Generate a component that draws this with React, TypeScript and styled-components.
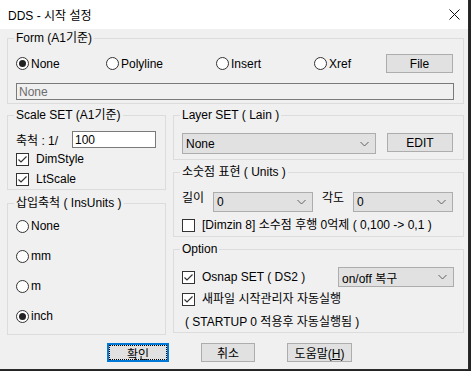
import React from "react";
import styled, { createGlobalStyle } from "styled-components";

const GlobalStyle = createGlobalStyle`
	html, body {
		margin: 0;
		padding: 0;
		background: #232323;
	}
	body {
		font-family: "Liberation Sans", "Noto Sans CJK KR", sans-serif;
		font-size: 12px;
		color: #000;
	}
	* {
		box-sizing: border-box;
	}
`;

const Window = styled.div`
	width: 469px;
	height: 370px;
	background: #f0f0f0;
	border-right: 1px solid #2b2b2b;
	border-bottom: 1px solid #2b2b2b;
	display: flex;
	flex-direction: column;
`;

const TitleBar = styled.div`
	height: 29px;
	flex: none;
	background: #fff;
	display: flex;
	align-items: center;
	justify-content: space-between;
	padding: 0 8px 1px 8px;
	font-size: 12px;
`;

const Body = styled.div`
	padding: 2px 4px 0 7px;
	display: flex;
	flex-direction: column;
`;

const GroupBox = styled.fieldset<{ $mt?: number; $pb?: number }>`
	margin: ${(p) => p.$mt ?? 0}px 0 0 0;
	padding: 0 9px ${(p) => p.$pb ?? 0}px 8px;
	border: 1px solid #dcdcdc;
	min-width: 0;
`;

const Legend = styled.legend`
	padding: 0 2px;
	margin-left: -2px;
	line-height: 14px;
	height: 14px;
`;

const FormRow = styled.div`
	display: grid;
	grid-template-columns: 90px 110px 98px 72px 67px;
	align-items: center;
	margin-top: 9px;
	height: 19px;
`;

const OptionLabel = styled.label<{ $h?: number }>`
	display: flex;
	align-items: center;
	white-space: nowrap;
	line-height: 14px;
	height: ${(p) => (p.$h ? `${p.$h}px` : "auto")};
`;

const RadioDot = styled.span<{ $on?: boolean }>`
	width: 13px;
	height: 13px;
	flex: none;
	margin-right: 2px;
	border: 1px solid #333;
	border-radius: 50%;
	background: #fff;
	display: flex;
	align-items: center;
	justify-content: center;
	&::after {
		content: "";
		display: ${(p) => (p.$on ? "block" : "none")};
		width: 7px;
		height: 7px;
		border-radius: 50%;
		background: #222;
	}
`;

const CheckBox = styled.span`
	width: 13px;
	height: 13px;
	flex: none;
	margin-right: 7px;
	border: 1px solid #333;
	background: #fff;
	display: flex;
	align-items: center;
	justify-content: center;
`;

const Button = styled.button<{ $w: number; $default?: boolean }>`
	width: ${(p) => p.$w}px;
	height: 19px;
	flex: none;
	padding: 0;
	margin: 0;
	font: inherit;
	color: #000;
	background: #e1e1e1;
	border: ${(p) => (p.$default ? "2px solid #0078d7" : "1px solid #adadad")};
	position: relative;
	&::after {
		content: "";
		display: ${(p) => (p.$default ? "block" : "none")};
		position: absolute;
		inset: 0;
		border: 1px dotted #000;
	}
`;

const FieldInput = styled.input<{ $w?: number; $grey?: boolean }>`
	display: block;
	width: ${(p) => (p.$w ? `${p.$w}px` : "100%")};
	height: 17px;
	padding: 0 2px;
	margin: 0;
	font: inherit;
	color: ${(p) => (p.$grey ? "#6d6d6d" : "#000")};
	background: ${(p) => (p.$grey ? "#f0f0f0" : "#fff")};
	border: 1px solid #7a7a7a;
	outline: none;
`;

const Combo = styled.div<{ $w: number; $h?: number; $ml?: number }>`
	width: ${(p) => p.$w}px;
	height: ${(p) => p.$h ?? 20}px;
	margin-left: ${(p) => p.$ml ?? 0}px;
	flex: none;
	background: #e1e1e1;
	border: 1px solid #adadad;
	display: flex;
	align-items: center;
	justify-content: space-between;
	padding: 0 6px 0 3px;
	white-space: nowrap;
`;

const Columns = styled.div`
	display: grid;
	grid-template-columns: 159px 291px;
	column-gap: 7px;
	margin-top: 4px;
`;

const Column = styled.div`
	display: flex;
	flex-direction: column;
`;

const ScaleRow = styled.div`
	display: flex;
	align-items: center;
	margin-top: 9px;
	height: 17px;
`;

const ScaleLabel = styled.span`
	width: 56px;
	flex: none;
	white-space: nowrap;
`;

const Row = styled.div<{ $mt?: number; $h?: number }>`
	display: flex;
	align-items: flex-start;
	margin-top: ${(p) => p.$mt ?? 0}px;
	height: ${(p) => (p.$h ? `${p.$h}px` : "auto")};
`;

const SplitRow = styled.div`
	display: flex;
	align-items: center;
	justify-content: space-between;
	margin-top: 11px;
	height: 20px;
`;

const FieldName = styled.span<{ $w: number; $ml?: number }>`
	width: ${(p) => p.$w}px;
	margin-left: ${(p) => p.$ml ?? 0}px;
	margin-top: -1px;
	line-height: 14px;
	flex: none;
`;

const Note = styled.div`
	margin-top: 3px;
	height: 20px;
	line-height: 20px;
	padding-left: 3px;
	white-space: nowrap;
`;

const ButtonBar = styled.div`
	display: flex;
	gap: 32px;
	margin-top: 8px;
	padding-left: 100px;
`;

const Chevron = () => (
	<svg width="9" height="6" viewBox="0 0 9 6">
		<polyline points="0.5,1 4.5,5 8.5,1" fill="none" stroke="#606060" strokeWidth="1" />
	</svg>
);

const Check = () => (
	<svg width="11" height="11" viewBox="0 0 11 11">
		<polyline points="1.5,5.5 4,8 9.5,2.5" fill="none" stroke="#333" strokeWidth="1.2" />
	</svg>
);

function Radio({ label, on, h }: { label: string; on?: boolean; h?: number }) {
	return (
		<OptionLabel $h={h}>
			<RadioDot $on={on} />
			{label}
		</OptionLabel>
	);
}

function CheckOption({ label, checked, h = 20 }: { label: string; checked?: boolean; h?: number }) {
	return (
		<OptionLabel $h={h}>
			<CheckBox>{checked && <Check />}</CheckBox>
			{label}
		</OptionLabel>
	);
}

function Select({ value, w, h, ml }: { value: string; w: number; h?: number; ml?: number }) {
	return (
		<Combo $w={w} $h={h} $ml={ml}>
			<span>{value}</span>
			<Chevron />
		</Combo>
	);
}

export default function App() {
	return (
		<>
			<GlobalStyle />
			<Window>
				<TitleBar>
					<span>DDS - 시작 설정</span>
					<svg width="11" height="11" viewBox="0 0 11 11">
						<path d="M0.5 0.5 L10.5 10.5 M10.5 0.5 L0.5 10.5" stroke="#111" strokeWidth="1" />
					</svg>
				</TitleBar>
				<Body>
					<GroupBox $pb={3}>
						<Legend>Form (A1기준)</Legend>
						<FormRow>
							<Radio label="None" on />
							<Radio label="Polyline" />
							<Radio label="Insert" />
							<Radio label="Xref" />
							<Button $w={67}>File</Button>
						</FormRow>
						<div style={{ marginTop: 10 }}>
							<FieldInput $grey readOnly value="None" />
						</div>
					</GroupBox>

					<Columns>
						<Column>
							<GroupBox>
								<Legend>Scale SET (A1기준)</Legend>
								<ScaleRow>
									<ScaleLabel>축척 : 1/</ScaleLabel>
									<FieldInput $w={84} readOnly value="100" />
								</ScaleRow>
								<Row $mt={1}>
									<CheckOption label="DimStyle" checked />
								</Row>
								<CheckOption label="LtScale" checked />
							</GroupBox>

							<GroupBox $mt={6} $pb={3}>
								<Legend>삽입축척 ( InsUnits )</Legend>
								<div style={{ paddingTop: 1 }}>
									<Radio label="None" h={30} />
									<Radio label="mm" h={30} />
									<Radio label="m" h={30} />
									<Radio label="inch" h={30} on />
								</div>
							</GroupBox>
						</Column>

						<Column>
							<GroupBox $pb={5}>
								<Legend>Layer SET ( Lain )</Legend>
								<Row $mt={11}>
									<Select value="None" w={194} h={21} />
									<Button $w={66} style={{ marginLeft: 11 }}>
										EDIT
									</Button>
								</Row>
							</GroupBox>

							<GroupBox $mt={5} $pb={1}>
								<Legend>소숫점 표현 ( Units )</Legend>
								<Row $mt={13}>
									<FieldName $w={31}>길이</FieldName>
									<Select value="0" w={100} />
									<FieldName $w={31} $ml={9}>
										각도
									</FieldName>
									<Select value="0" w={100} />
								</Row>
								<Row $mt={3}>
									<CheckOption label="[Dimzin 8] 소수점 후행 0억제 ( 0,100 -> 0,1 )" />
								</Row>
							</GroupBox>

							<GroupBox $mt={5}>
								<Legend>Option</Legend>
								<SplitRow>
									<CheckOption label="Osnap SET ( DS2 )" checked />
									<Select value="on/off 복구" w={116} />
								</SplitRow>
								<Row $mt={2}>
									<CheckOption label="새파일 시작관리자 자동실행" checked />
								</Row>
								<Note>( STARTUP 0 적용후 자동실행됨 )</Note>
							</GroupBox>
						</Column>
					</Columns>

					<ButtonBar>
						<Button $w={62} $default>
							확인
						</Button>
						<Button $w={54}>취소</Button>
						<Button $w={65}>
							도움말(<u>H</u>)
						</Button>
					</ButtonBar>
				</Body>
			</Window>
		</>
	);
}
